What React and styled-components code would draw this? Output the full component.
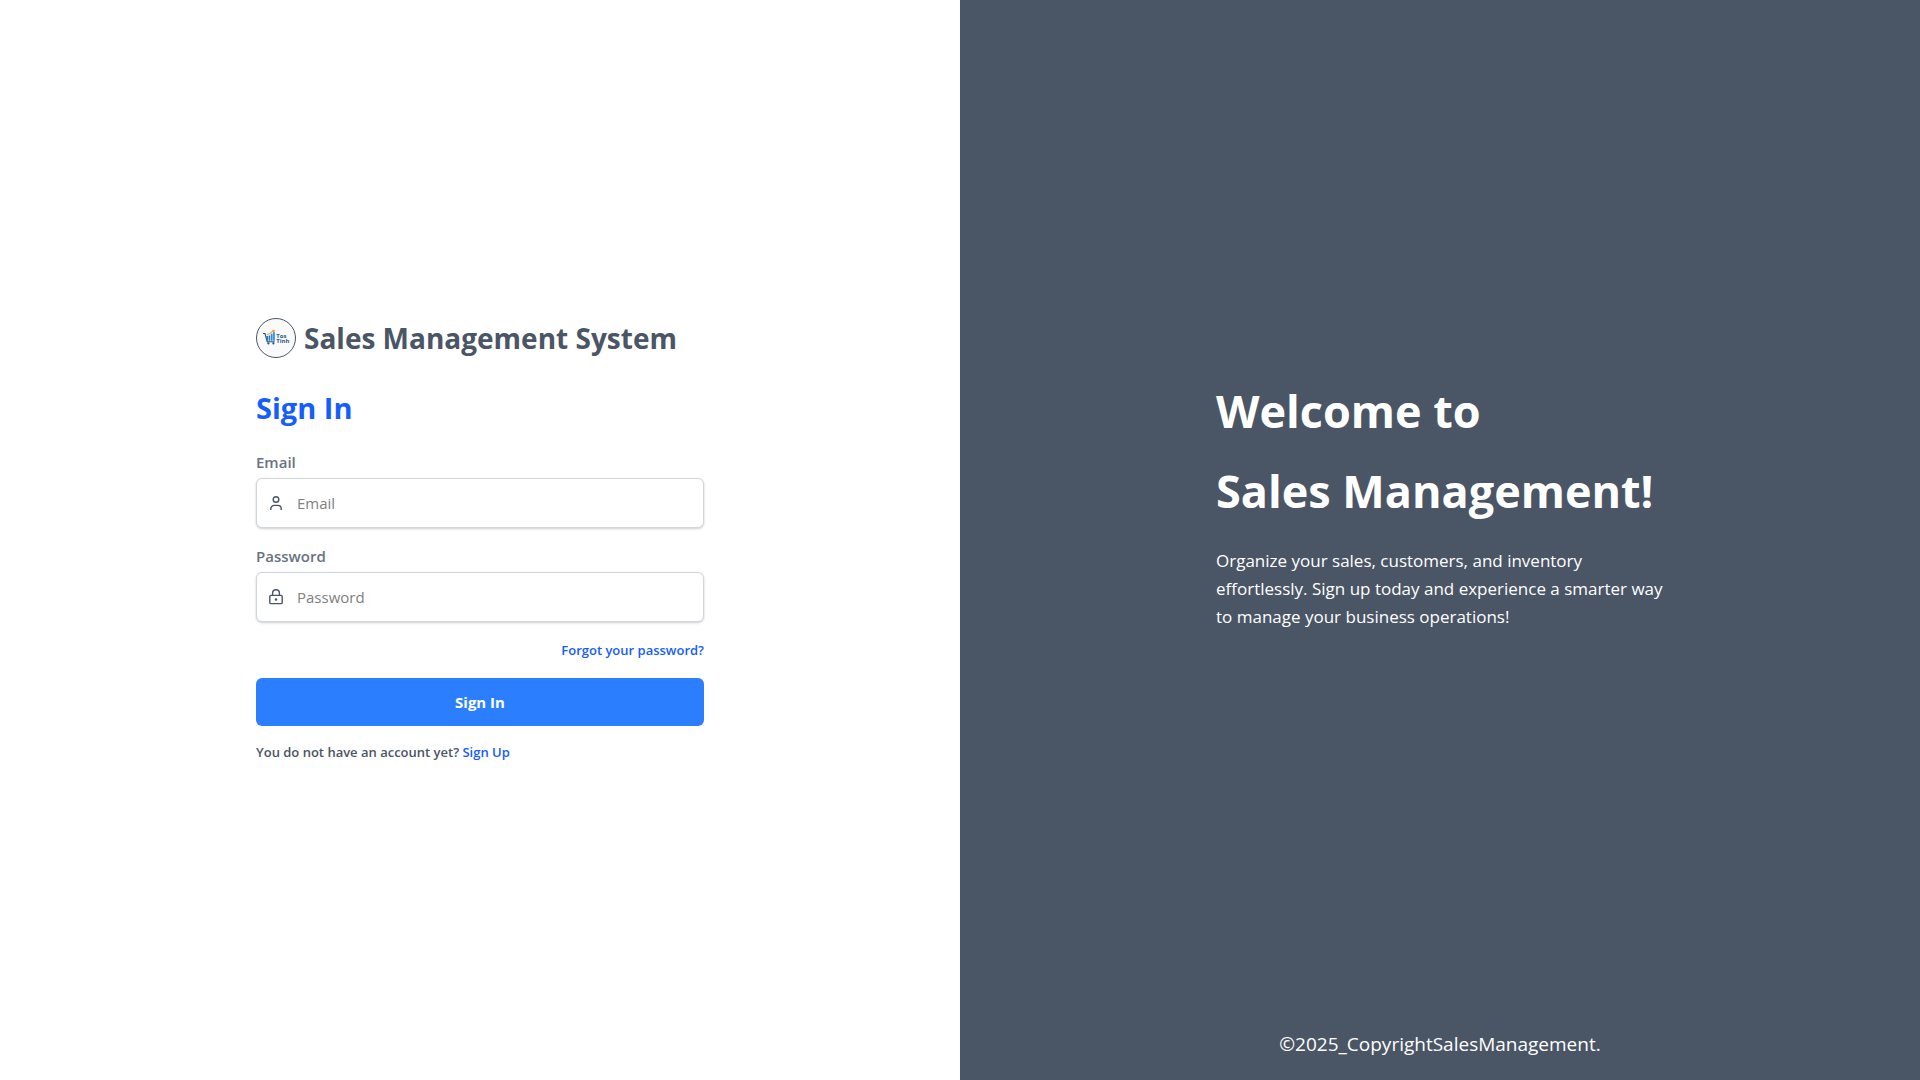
import React from "react";
import styled, { createGlobalStyle } from "styled-components";

const GlobalStyle = createGlobalStyle`
  *, *::before, *::after { box-sizing: border-box; }
  body {
    margin: 0;
    background: #fff;
    font-family: "Segoe UI", "Open Sans", "Noto Sans", sans-serif;
    color: #4a5565;
  }
  h1, h2, p { margin: 0; }
`;

const Page = styled.main`
  display: grid;
  grid-template-columns: 1fr 1fr;
  min-height: 100vh;
`;

const FormPanel = styled.section`
  display: flex;
  flex-direction: column;
  align-items: center;
  justify-content: center;
`;

const FormColumn = styled.div`
  display: flex;
  flex-direction: column;
  width: 100%;
  max-width: 448px;
`;

const Brand = styled.div`
  display: flex;
  align-items: center;
  gap: 8px;
  margin-bottom: 30px;
`;

const LogoMark = styled.svg`
  flex: none;
  width: 40px;
  height: 40px;
`;

const Title = styled.h1`
  font-size: 28px;
  line-height: 40px;
  font-weight: 700;
  white-space: nowrap;
`;

const FormTitle = styled.h2`
  margin-bottom: 22px;
  font-size: 29px;
  line-height: 40px;
  font-weight: 700;
  color: #155dfc;
`;

const Form = styled.form`
  display: flex;
  flex-direction: column;
  gap: 16px;
`;

const Field = styled.div`
  display: flex;
  flex-direction: column;
  gap: 4px;
`;

const Label = styled.label`
  font-size: 15px;
  line-height: 24px;
  font-weight: 600;
  color: #6a7282;
`;

const InputBox = styled.div`
  display: flex;
  align-items: center;
  height: 50px;
  padding: 0 10px;
  gap: 10px;
  border: 1px solid #d1d5dc;
  border-radius: 6px;
  background: #fff;
  box-shadow: 0 1px 3px rgba(0, 0, 0, 0.1), 0 1px 2px rgba(0, 0, 0, 0.1);
`;

const FieldIcon = styled.svg`
  flex: none;
  width: 18px;
  height: 18px;
  fill: none;
  stroke: #4a5565;
  stroke-width: 1.4;
`;

const Input = styled.input`
  flex: 1;
  min-width: 0;
  height: 48px;
  padding: 0 2px;
  border: 0;
  outline: 0;
  background: transparent;
  font: inherit;
  font-size: 15px;
  color: #4a5565;
  &::placeholder { color: #808080; opacity: 1; }
`;

const Link = styled.a`
  font-size: 13px;
  line-height: 20px;
  font-weight: 600;
  color: #155dfc;
  text-decoration: none;
`;

const ForgotRow = styled.div`
  display: flex;
  align-items: center;
  justify-content: flex-end;
  min-height: 24px;
`;

const SubmitButton = styled.button`
  height: 48px;
  border: 0;
  border-radius: 6px;
  background: #2b7fff;
  color: #fff;
  font: inherit;
  font-size: 15px;
  font-weight: 700;
  cursor: pointer;
`;

const SignUpNote = styled.p`
  font-size: 13px;
  line-height: 20px;
  font-weight: 600;
`;

const WelcomePanel = styled.section`
  display: flex;
  flex-direction: column;
  align-items: center;
  background: #4a5565;
  color: #fff;
`;

const WelcomeBody = styled.div`
  display: flex;
  flex: 1;
  flex-direction: column;
  justify-content: center;
  width: 100%;
  max-width: 448px;
  padding-bottom: 28px;
`;

const WelcomeTitle = styled.h2`
  margin-bottom: 16px;
  font-size: 45px;
  line-height: 80px;
  font-weight: 700;
  white-space: nowrap;
`;

const WelcomeText = styled.p`
  font-size: 17px;
  line-height: 28px;
`;

const Footer = styled.footer`
  padding: 0 16px 22px;
  font-size: 19px;
  line-height: 28px;
`;

function Logo() {
  return (
    <LogoMark viewBox="0 0 40 40" role="img" aria-label="Tos Tinh">
      <circle cx="20" cy="20" r="19.5" fill="#fafafa" stroke="#4a5565" />
      <path d="M7 15.5h2l2.2 8.2h7.5" fill="none" stroke="#20507f" strokeWidth="1.1" />
      <path d="M10.2 18h1.8v4.8h-1zM12.6 17.5h1.6v5.3h-1.6z" fill="#2d77b8" />
      <path d="M14.8 15.8h1.8v7h-1.8zM17.1 14h1.7v8.8h-1.7z" fill="#228fe0" />
      <path d="M10.8 16.8l3.4-1.6 2.9-2.3" fill="none" stroke="#f5a142" strokeWidth="1.1" />
      <path d="M15.7 12.3l3.1-.6-.4 3.1z" fill="#f39a32" />
      <circle cx="12.4" cy="25.4" r="1.1" fill="#20507f" />
      <circle cx="17.4" cy="25.4" r="1.1" fill="#20507f" />
      <g fill="#285a8c" fontFamily="Open Sans, sans-serif" fontSize="6" fontWeight="700">
        <text x="20.2" y="20">Tos</text>
        <text x="20.2" y="25.4">Tinh</text>
      </g>
    </LogoMark>
  );
}

function UserIcon() {
  return (
    <FieldIcon viewBox="0 0 18 18" aria-hidden="true">
      <circle cx="9" cy="5.5" r="2.8" />
      <path d="M3.8 16v-1.2a3.4 3.4 0 0 1 3.4-3.4h3.6a3.4 3.4 0 0 1 3.4 3.4V16" />
    </FieldIcon>
  );
}

function LockIcon() {
  return (
    <FieldIcon viewBox="0 0 18 18" aria-hidden="true">
      <rect x="2.8" y="7.4" width="12.4" height="8.2" rx="1.2" />
      <path d="M5.6 7.4V5.2a3.4 3.4 0 0 1 6.8 0v2.2" />
      <circle cx="9" cy="11.5" r="1.3" fill="#4a5565" stroke="none" />
    </FieldIcon>
  );
}

export default function App() {
  return (
    <>
      <GlobalStyle />
      <Page>
        <FormPanel>
          <FormColumn>
            <Brand>
              <Logo />
              <Title>Sales Management System</Title>
            </Brand>
            <FormTitle>Sign In</FormTitle>
            <Form onSubmit={(e) => e.preventDefault()}>
              <Field>
                <Label htmlFor="email">Email</Label>
                <InputBox>
                  <UserIcon />
                  <Input id="email" type="email" placeholder="Email" />
                </InputBox>
              </Field>
              <Field>
                <Label htmlFor="password">Password</Label>
                <InputBox>
                  <LockIcon />
                  <Input id="password" type="password" placeholder="Password" />
                </InputBox>
              </Field>
              <ForgotRow>
                <Link href="#forgot">Forgot your password?</Link>
              </ForgotRow>
              <SubmitButton type="submit">Sign In</SubmitButton>
              <SignUpNote>
                You do not have an account yet? <Link href="#signup">Sign Up</Link>
              </SignUpNote>
            </Form>
          </FormColumn>
        </FormPanel>
        <WelcomePanel>
          <WelcomeBody>
            <WelcomeTitle>
              Welcome to
              <br />
              Sales Management!
            </WelcomeTitle>
            <WelcomeText>
              Organize your sales, customers, and inventory effortlessly. Sign up today and
              experience a smarter way to manage your business operations!
            </WelcomeText>
          </WelcomeBody>
          <Footer>©2025_CopyrightSalesManagement.</Footer>
        </WelcomePanel>
      </Page>
    </>
  );
}
